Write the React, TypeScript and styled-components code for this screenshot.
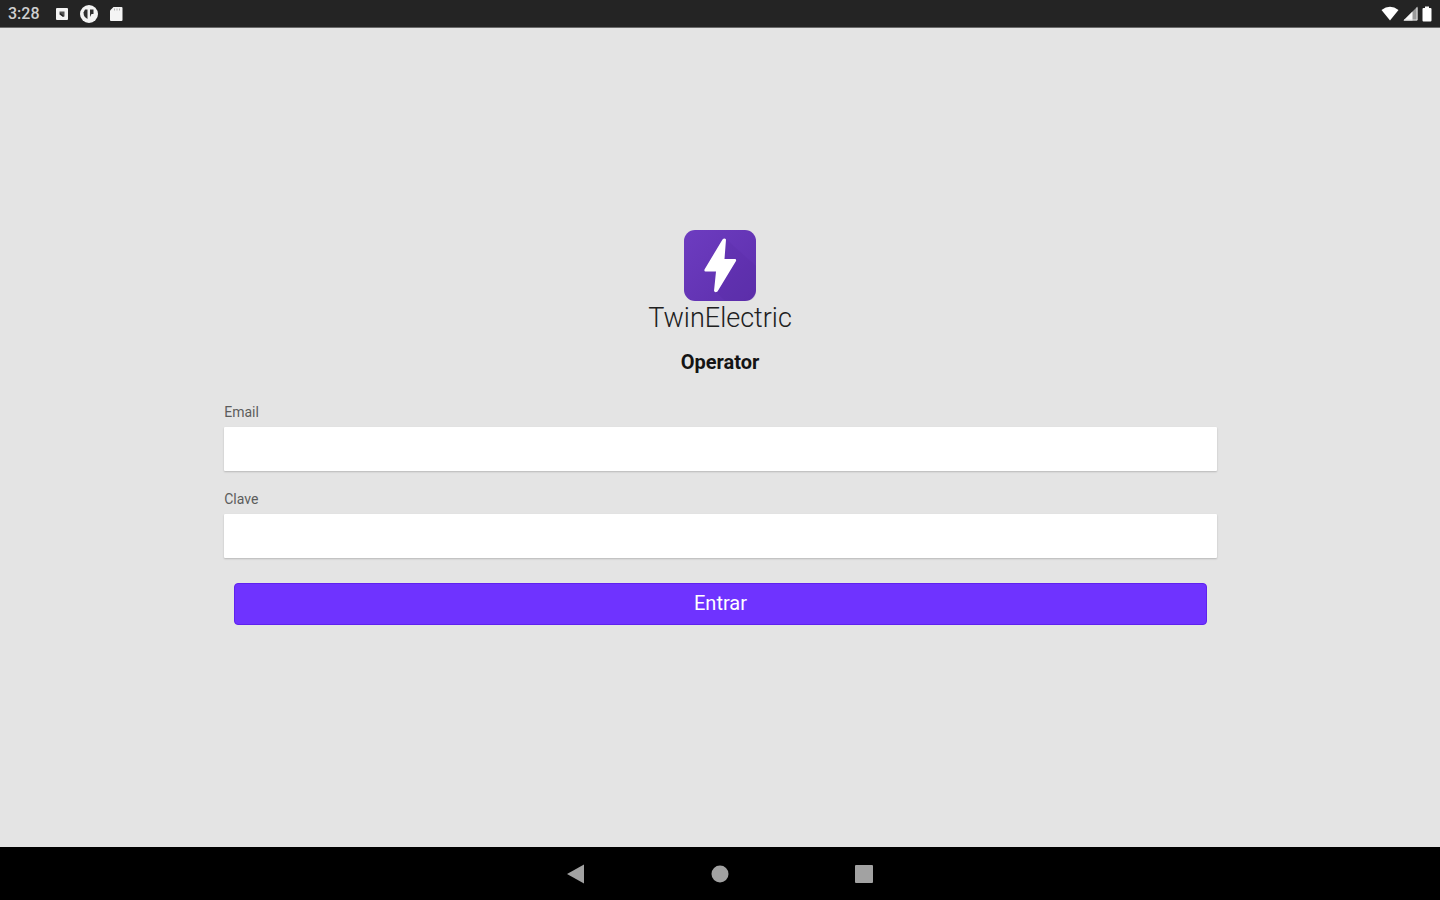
import React from "react";
import styled, { createGlobalStyle } from "styled-components";

const GlobalStyle = createGlobalStyle`
  *, *::before, *::after { box-sizing: border-box; }
  body {
    margin: 0;
    font-family: Roboto, "Liberation Sans", sans-serif;
    background: #e4e4e4;
    color: #202020;
  }
`;

const Screen = styled.div`
  display: flex;
  flex-direction: column;
  min-height: 100vh;
`;

const StatusBar = styled.header`
  display: flex;
  align-items: center;
  justify-content: space-between;
  height: 28px;
  padding: 0 8px 0 8px;
  background: #242424;
  border-bottom: 1px solid #6c6c6c;
  color: #f2f2f2;
`;

const StatusGroup = styled.div<{ $gap: number }>`
  display: flex;
  align-items: center;
  gap: ${({ $gap }) => $gap}px;
  svg { display: block; }
`;

const Clock = styled.time`
  width: 37px;
  font-size: 16px;
  line-height: 20px;
  font-weight: 500;
  color: #d0d0d0;
`;

const Main = styled.main`
  flex: 1;
  display: flex;
  flex-direction: column;
  align-items: center;
  justify-content: center;
  padding-bottom: 20px;
`;

const Brand = styled.div`
  display: flex;
  flex-direction: column;
  align-items: center;
  svg { display: block; }
`;

const Title = styled.h1`
  margin: 0;
  font-size: 27px;
  line-height: 32px;
  font-weight: 300;
`;

const Role = styled.h2`
  margin: 16px 0 0;
  font-size: 20px;
  line-height: 24px;
  font-weight: 700;
  color: #141414;
`;

const LoginForm = styled.form`
  display: flex;
  flex-direction: column;
  gap: 20px;
  width: 69%;
  padding-left: 1px;
  margin-top: 30px;
`;

const Field = styled.div`
  display: flex;
  flex-direction: column;
  gap: 7px;
`;

const Label = styled.label`
  font-size: 14px;
  line-height: 16px;
  color: #5c5c5c;
`;

const Input = styled.input`
  width: 100%;
  height: 44px;
  padding: 0 12px;
  border: 0;
  border-radius: 1px;
  background: #fff;
  box-shadow: 0 1px 2px rgba(0, 0, 0, 0.2);
  font: inherit;
  font-size: 18px;
`;

const SubmitButton = styled.button`
  height: 42px;
  margin: 5px 10px 0;
  padding: 0 16px 2px;
  border: 1px solid #5f22ee;
  border-radius: 4px;
  background: #6f33ff;
  color: #fff;
  font: inherit;
  font-size: 20px;
  line-height: 24px;
`;

const NavBar = styled.nav`
  display: flex;
  align-items: center;
  justify-content: center;
  gap: 120px;
  height: 53px;
  background: #000;
`;

const NavButton = styled.button`
  display: flex;
  align-items: center;
  justify-content: center;
  width: 24px;
  height: 24px;
  padding: 0;
  border: 0;
  background: transparent;
  color: #a2a2a2;
`;

const AppBadgeIcon = () => (
  <svg width="14" height="14" viewBox="0 0 14 14" aria-hidden="true">
    <rect x="1" y="1" width="12" height="12" rx="1" fill="#f4f4f4" />
    <path d="M4.500 4.500h5v5h-2l-3-2z" fill="#555" />
    <path d="M5 6.500l3.500 3" stroke="#222" strokeWidth="1.200" />
  </svg>
);

const DiscIcon = () => (
  <svg width="20" height="20" viewBox="0 0 20 20" aria-hidden="true">
    <circle cx="10" cy="10" r="9" fill="#f4f4f4" />
    <path d="M6 5.500h2.500v9.500q-4-2-4-6.500z" fill="#303030" />
    <path d="M11 5.500h3.500v4.500h-2l-1.500 3z" fill="#303030" />
  </svg>
);

const SdCardIcon = () => (
  <svg width="14" height="16" viewBox="0 0 14 16" aria-hidden="true">
    <path d="M4.500 1H12.500q1 0 1 1v12q0 1-1 1H2q-1 0-1-1V4.500z" fill="#f4f4f4" />
    <path d="M5.500 2.500v2M8 2.500v2M10.500 2.500v2" stroke="#b4b4b4" />
  </svg>
);

const WifiIcon = () => (
  <svg width="18" height="15" viewBox="0 0 18 15" aria-hidden="true">
    <path d="M9 14.500L.5 4Q9-2.500 17.500 4z" fill="#fff" />
  </svg>
);

const SignalIcon = () => (
  <svg width="15" height="15" viewBox="0 0 15 15" aria-hidden="true">
    <path d="M14.500.5v14H.5z" fill="#9a9a9a" />
    <path d="M9.500 5.500v9H.5z" fill="#f8f8f8" />
    <path d="M14 1.500v12.500H1" fill="none" stroke="#e0e0e0" />
  </svg>
);

const BatteryIcon = () => (
  <svg width="10" height="16" viewBox="0 0 10 16" aria-hidden="true">
    <path d="M3 .5h4v1.500h1.500q1 0 1 1v11.500q0 1-1 1h-7q-1 0-1-1V3q0-1 1-1H3z" fill="#fff" />
  </svg>
);

const BoltLogo = () => (
  <svg width="72" height="72" viewBox="0 0 72 72" role="img" aria-label="TwinElectric">
    <defs>
      <linearGradient id="tile" x1="0" y1="0" x2="1" y2="1">
        <stop offset="0" stopColor="#6d3cc0" />
        <stop offset="1" stopColor="#5d2fac" />
      </linearGradient>
    </defs>
    <rect width="72" height="71" rx="11" fill="url(#tile)" />
    <path d="M42 9L72 36v24q0 11-11 11H41L32 62z" fill="#54289f" opacity=".2" />
    <path
      d="M38.500 9.500L20.500 39.500q-.5 2 1 2H32L30 61q1 2 3.500.5L52 31q.5-2-1-2H40.500L42 9.500q-1.500-2-3.500 0z"
      fill="#fff"
    />
  </svg>
);

export default function App() {
  return (
    <>
      <GlobalStyle />
      <Screen>
        <StatusBar>
          <StatusGroup $gap={10}>
            <Clock>3:28</Clock>
            <AppBadgeIcon />
            <DiscIcon />
            <SdCardIcon />
          </StatusGroup>
          <StatusGroup $gap={4}>
            <WifiIcon />
            <SignalIcon />
            <BatteryIcon />
          </StatusGroup>
        </StatusBar>
        <Main>
          <Brand>
            <BoltLogo />
            <Title>TwinElectric</Title>
            <Role>Operator</Role>
          </Brand>
          <LoginForm onSubmit={(event) => event.preventDefault()}>
            <Field>
              <Label htmlFor="email">Email</Label>
              <Input id="email" type="email" autoComplete="username" />
            </Field>
            <Field>
              <Label htmlFor="clave">Clave</Label>
              <Input id="clave" type="password" autoComplete="current-password" />
            </Field>
            <SubmitButton type="submit">Entrar</SubmitButton>
          </LoginForm>
        </Main>
        <NavBar>
          <NavButton type="button" aria-label="Back">
            <svg width="20" height="20" viewBox="0 0 20 20" fill="currentColor">
              <path d="M1 10L18 0.500v19z" />
            </svg>
          </NavButton>
          <NavButton type="button" aria-label="Home">
            <svg width="18" height="18" viewBox="0 0 18 18" fill="currentColor">
              <circle cx="9" cy="9" r="8.500" />
            </svg>
          </NavButton>
          <NavButton type="button" aria-label="Recents">
            <svg width="18" height="18" viewBox="0 0 18 18" fill="currentColor">
              <rect width="18" height="18" rx="1" />
            </svg>
          </NavButton>
        </NavBar>
      </Screen>
    </>
  );
}
